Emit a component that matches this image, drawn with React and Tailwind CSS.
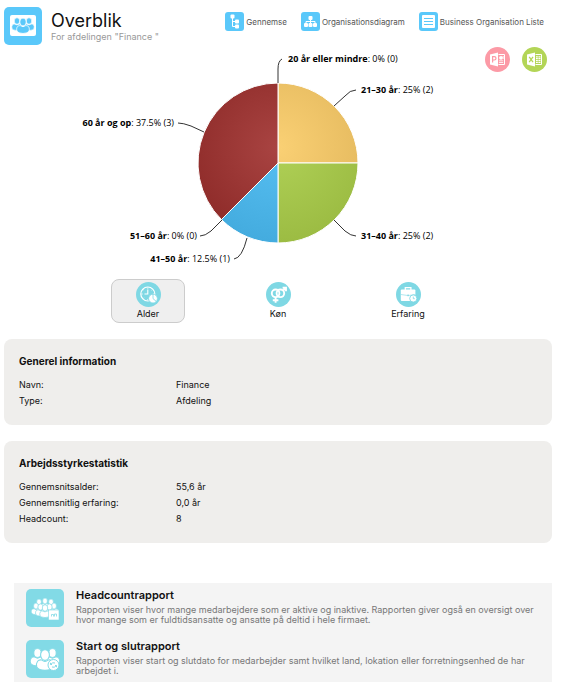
import React, { useState } from "react";
import clsx from "clsx";

// ─── data ────────────────────────────────────────────────────────────────────
const SLICES = [
  { id: "age-21", from: 0, to: 90, light: "#fad074", dark: "#e2b75c" },
  { id: "age-31", from: 90, to: 180, light: "#b0d157", dark: "#9aba41" },
  { id: "age-41", from: 180, to: 225, light: "#57bff2", dark: "#42aadd" },
  { id: "age-60", from: 225, to: 360, light: "#a94442", dark: "#8c2927" },
];

const SLICE_LABELS = [
  { name: "20 år eller mindre", value: "0% (0)", x: 218, y: 17, anchor: "start", line: "M208 38V24Q208 16 212 14" },
  { name: "21–30 år", value: "25% (2)", x: 291, y: 48, anchor: "start", line: "M264 61L275 51Q280 45 286 45" },
  { name: "31–40 år", value: "25% (2)", x: 291, y: 194, anchor: "start", line: "M264 175L275 186Q281 191 286 191" },
  { name: "41–50 år", value: "12.5% (1)", x: 160, y: 217, anchor: "end", line: "M177 193Q172 213 164 214" },
  { name: "51–60 år", value: "0% (0)", x: 127, y: 194, anchor: "end", line: "M152 175L141 186Q135 191 130 191" },
  { name: "60 år og op", value: "37.5% (3)", x: 104, y: 81, anchor: "end", line: "M134 87L121 81Q113 78 108 78" },
];

const GENERAL = [
  { label: "Navn:", value: "Finance" },
  { label: "Type:", value: "Afdeling" },
];

const WORKFORCE = [
  { label: "Gennemsnitsalder:", value: "55,6 år" },
  { label: "Gennemsnitlig erfaring:", value: "0,0 år" },
  { label: "Headcount:", value: "8" },
];

// ─── icons ───────────────────────────────────────────────────────────────────
function Person({ x, y, s = 1, stroke }) {
  return (
    <g transform={`translate(${x} ${y}) scale(${s})`} stroke={stroke} strokeWidth="1">
      <path d="M-7.5 11C-8.5 6-6 4-3 4.5Q0 7 3 4.5C6 4 8.5 6 7.5 11Q6 14 0 14T-7.5 11Z" />
      <ellipse cx="0" cy="0" rx="4" ry="4.8" />
    </g>
  );
}

function DepartmentIcon() {
  return (
    <svg viewBox="0 0 38 38" className="size-[38px] shrink-0" aria-hidden="true">
      <rect width="38" height="38" rx="5" fill="#5ac8fa" />
      <rect x="6" y="8" width="26" height="21" rx="2" fill="#fff" />
      <g fill="#5ac8fa">
        <Person x={13} y={14} s={0.68} stroke="#fff" />
        <Person x={25} y={14} s={0.68} stroke="#fff" />
        <Person x={19} y={15} s={0.82} stroke="#fff" />
      </g>
    </svg>
  );
}

function BrowseIcon() {
  return (
    <svg viewBox="0 0 19 19" className="size-[19px] shrink-0" aria-hidden="true">
      <rect width="19" height="19" rx="3" fill="#5ac8fa" />
      <path d="M7.5 5V14.5H11M7.5 9.5H11" fill="none" stroke="#fff" />
      <g fill="#fff">
        <rect x="5.5" y="2.5" width="4" height="4" rx="1" />
        <rect x="10" y="7.5" width="4" height="4" rx="1" />
        <rect x="10" y="12.5" width="4" height="4" rx="1" />
      </g>
    </svg>
  );
}

function DiagramIcon() {
  return (
    <svg viewBox="0 0 19 19" className="size-[19px] shrink-0" aria-hidden="true">
      <rect width="19" height="19" rx="3" fill="#5ac8fa" />
      <path d="M9.5 7V12M5 12V9.5H14V12" fill="none" stroke="#fff" />
      <g fill="#fff">
        <rect x="7.5" y="4" width="4" height="4" rx="1" />
        <rect x="3" y="11" width="4" height="4" rx="1" />
        <rect x="7.5" y="11" width="4" height="4" rx="1" />
        <rect x="12" y="11" width="4" height="4" rx="1" />
      </g>
    </svg>
  );
}

function ListIcon() {
  return (
    <svg viewBox="0 0 19 19" className="size-[19px] shrink-0" aria-hidden="true">
      <rect width="19" height="19" rx="3" fill="#5ac8fa" />
      <rect x="3" y="3" width="13" height="13" rx="1" fill="#fff" />
      <path d="M5 6.5H14M5 9.5H14M5 12.5H14" stroke="#5ac8fa" strokeWidth="1" />
    </svg>
  );
}

function PowerpointIcon() {
  return (
    <svg viewBox="0 0 25 25" className="size-[25px]" aria-hidden="true">
      <circle cx="12.5" cy="12.5" r="12.5" fill="#fc9aa6" />
      <path d="M5 7.5L13 5.5V19.5L5 17.5Z" fill="#fff" />
      <path d="M7.6 15.5V9.6H9.3Q11 9.6 11 11.3T9.3 13H7.6" fill="none" stroke="#fc9aa6" strokeWidth="1.2" />
      <path d="M13.5 7.5H19.5V17.5H13.5" fill="none" stroke="#fff" />
      <circle cx="16" cy="10.8" r="1.9" fill="#fff" />
      <path d="M14 13.8H18.2M14 15.5H18.2M18.2 9V12" stroke="#fff" strokeWidth=".8" />
    </svg>
  );
}

function ExcelIcon() {
  return (
    <svg viewBox="0 0 25 25" className="size-[25px]" aria-hidden="true">
      <circle cx="12.5" cy="12.5" r="12.5" fill="#b3d557" />
      <path d="M5 7.5L13 5.5V19.5L5 17.5Z" fill="#fff" />
      <path d="M7.2 9.8L11 15.2M11 9.8L7.2 15.2" stroke="#b3d557" strokeWidth="1.3" />
      <path d="M13.5 7.5H19.5V17.5H13.5" fill="none" stroke="#fff" />
      <path d="M14 9.8H18.5M14 11.7H18.5M14 13.6H18.5M14 15.5H18.5" stroke="#fff" strokeWidth="1.2" />
      <path d="M16.2 8.5V16.5" stroke="#b3d557" strokeWidth=".6" />
    </svg>
  );
}

function AgeIcon() {
  return (
    <svg viewBox="0 0 25 25" className="size-[25px]" aria-hidden="true">
      <circle cx="12.5" cy="12.5" r="12.5" fill="#7fd8e4" />
      <g fill="none" stroke="#fff">
        <circle cx="11.8" cy="12" r="7" strokeWidth="1.2" />
        <path d="M11.8 7.5V12H8.5" strokeWidth="1.1" />
        <path d="M11.8 5.5V6.8M5.5 12H6.8M16.8 12H18M11.8 17V18.5M7.3 7.5L8 8.2M16.3 7.5L15.6 8.2M7.3 16.5L8 15.8" strokeWidth=".8" />
      </g>
      <circle cx="17" cy="16.6" r="4.4" fill="#fff" stroke="#7fd8e4" strokeWidth=".8" />
      <path d="M17 16.6V12.2M17 16.6L20.5 19.6" stroke="#7fd8e4" strokeWidth=".8" />
    </svg>
  );
}

function GenderIcon() {
  return (
    <svg viewBox="0 0 25 25" className="size-[25px]" aria-hidden="true">
      <circle cx="12.5" cy="12.5" r="12.5" fill="#7fd8e4" />
      <g fill="none" stroke="#fff" strokeWidth="1.9">
        <circle cx="9.6" cy="11.3" r="3.8" />
        <circle cx="14.4" cy="11.3" r="3.8" />
        <path d="M9.6 15V20.8M6.8 18.2H12.4M17 8.6L20 5.8M16.6 5.8H20V9.2" />
      </g>
    </svg>
  );
}

function ExperienceIcon() {
  return (
    <svg viewBox="0 0 25 25" className="size-[25px]" aria-hidden="true">
      <circle cx="12.5" cy="12.5" r="12.5" fill="#7fd8e4" />
      <path d="M9.3 8V5.7H14.9V8" fill="none" stroke="#fff" strokeWidth="1.3" />
      <rect x="4.8" y="7.5" width="14.6" height="11.5" rx="1" fill="#fff" />
      <path d="M4.8 12.5L11 13.4H13.2L19.4 12.5" fill="none" stroke="#7fd8e4" strokeWidth=".6" />
      <rect x="11.4" y="12.6" width="1.4" height="1.6" fill="#7fd8e4" />
      <circle cx="17.3" cy="16.5" r="3.6" fill="#fff" stroke="#7fd8e4" strokeWidth=".9" />
      <path d="M17.3 14.6V16.7H18.8" fill="none" stroke="#7fd8e4" strokeWidth=".8" />
    </svg>
  );
}

function HeadcountIcon() {
  return (
    <svg viewBox="0 0 38 38" className="size-[38px] shrink-0" aria-hidden="true">
      <rect width="38" height="38" rx="5" fill="#82dae6" />
      <g fill="#fff">
        <Person x={13} y={13} s={0.6} stroke="#82dae6" />
        <Person x={25} y={13} s={0.6} stroke="#82dae6" />
        <Person x={19} y={12} s={0.6} stroke="#82dae6" />
        <Person x={10} y={17} s={0.62} stroke="#82dae6" />
        <Person x={28} y={17} s={0.62} stroke="#82dae6" />
        <Person x={14.5} y={18} s={0.65} stroke="#82dae6" />
        <Person x={23.5} y={18} s={0.65} stroke="#82dae6" />
        <Person x={19} y={19} s={0.68} stroke="#82dae6" />
      </g>
      <rect x="22.5" y="21" width="10.5" height="10" fill="#fff" stroke="#82dae6" strokeWidth=".6" />
      <path d="M25.5 27.5V25.5H27.5V27.5M28.5 27.5V25H30.5V27.5" fill="none" stroke="#82dae6" strokeWidth=".8" />
    </svg>
  );
}

function StartEndIcon() {
  return (
    <svg viewBox="0 0 38 38" className="size-[38px] shrink-0" aria-hidden="true">
      <rect width="38" height="38" rx="5" fill="#82dae6" />
      <g fill="#fff">
        <Person x={11.5} y={13} s={0.92} stroke="#82dae6" />
        <Person x={26.5} y={13} s={0.92} stroke="#82dae6" />
        <Person x={19} y={15} s={1.1} stroke="#82dae6" />
      </g>
      <circle cx="27.5" cy="25" r="5.5" fill="#fff" stroke="#82dae6" />
      <path d="M24.8 24.5Q26 21.8 29 23M30.2 25.5Q29 28.2 26 27M26 24.5H24.5V22.8M29 25.5H30.5V27.2" fill="none" stroke="#82dae6" />
    </svg>
  );
}

const NAV_LINKS = [
  { label: "Gennemse", Icon: BrowseIcon },
  { label: "Organisationsdiagram", Icon: DiagramIcon },
  { label: "Business Organisation Liste", Icon: ListIcon },
];

const TABS = [
  { id: "age", label: "Alder", Icon: AgeIcon },
  { id: "gender", label: "Køn", Icon: GenderIcon },
  { id: "experience", label: "Erfaring", Icon: ExperienceIcon },
];

const REPORTS = [
  {
    title: "Headcountrapport",
    text: "Rapporten viser hvor mange medarbejdere som er aktive og inaktive. Rapporten giver også en oversigt over hvor mange som er fuldtidsansatte og ansatte på deltid i hele firmaet.",
    Icon: HeadcountIcon,
  },
  {
    title: "Start og slutrapport",
    text: "Rapporten viser start og slutdato for medarbejder samt hvilket land, lokation eller forretningsenhed de har arbejdet i.",
    Icon: StartEndIcon,
  },
];

// ─── pie chart ───────────────────────────────────────────────────────────────
const CX = 208;
const CY = 118;
const R = 80;

function slicePath(from, to) {
  const point = (deg) => {
    const a = ((deg - 90) * Math.PI) / 180;
    return `${CX + R * Math.cos(a)} ${CY + R * Math.sin(a)}`;
  };
  return `M${CX} ${CY}L${point(from)}A${R} ${R} 0 0 1 ${point(to)}Z`;
}

function AgeChart() {
  return (
    <svg viewBox="0 0 416 230" className="h-[230px] w-[416px]" role="img" aria-label="Alder">
      <defs>
        {SLICES.map((s) => (
          <radialGradient key={s.id} id={s.id} gradientUnits="userSpaceOnUse" cx={CX} cy={CY - 16} r="104">
            <stop offset="0" stopColor={s.light} />
            <stop offset="1" stopColor={s.dark} />
          </radialGradient>
        ))}
      </defs>
      {SLICES.map((s) => (
        <path key={s.id} d={slicePath(s.from, s.to)} fill={`url(#${s.id})`} stroke="#fff" strokeLinejoin="round" />
      ))}
      {SLICE_LABELS.map((l) => (
        <g key={l.name}>
          <path d={l.line} fill="none" stroke="#333" />
          <text x={l.x} y={l.y} textAnchor={l.anchor} className="font-['Open_Sans',sans-serif] text-[9px]">
            <tspan className="font-bold">{l.name}</tspan>: {l.value}
          </text>
        </g>
      ))}
    </svg>
  );
}

// ─── info card ───────────────────────────────────────────────────────────────
function InfoCard({ title, rows }) {
  return (
    <section className="rounded-lg bg-[#efeeec] px-[15px] pt-[14px] pb-4">
      <h2 className="text-[10px] leading-4 font-bold">{title}</h2>
      <dl className="mt-2 text-[9px] leading-4">
        {rows.map((row) => (
          <div key={row.label} className="flex">
            <dt className="w-[157px]">{row.label}</dt>
            <dd>{row.value}</dd>
          </div>
        ))}
      </dl>
    </section>
  );
}

// ─── page ────────────────────────────────────────────────────────────────────
function App() {
  const [tab, setTab] = useState("age");

  return (
    <main className="bg-white pt-[7px] pr-[9px] pb-[7px] pl-1 font-['Inter',sans-serif] text-[#111]">
      {/* ── HEADER ─────────────────────────────────────────────────────── */}
      <header className="flex items-start justify-between">
        <div className="flex gap-[9px]">
          <DepartmentIcon />
          <div className="pt-1">
            <h1 className="text-[18px] leading-5">Overblik</h1>
            <p className="text-[9px] leading-3 text-[#999]">For afdelingen "Finance "</p>
          </div>
        </div>
        <nav className="flex gap-[14px] pt-[5px] pr-2">
          {NAV_LINKS.map(({ label, Icon }) => (
            <a key={label} href="#" className="flex items-center gap-[2px] text-[8px] leading-4 whitespace-nowrap text-[#555]">
              <Icon />
              {label}
            </a>
          ))}
        </nav>
      </header>

      {/* ── CHART ──────────────────────────────────────────────────────── */}
      <div className="relative flex justify-center">
        <AgeChart />
        <div className="absolute top-[2px] right-[5px] flex gap-3">
          <button type="button" aria-label="PowerPoint">
            <PowerpointIcon />
          </button>
          <button type="button" aria-label="Excel">
            <ExcelIcon />
          </button>
        </div>
      </div>

      {/* ── CHART TABS ─────────────────────────────────────────────────── */}
      <div role="tablist" className="mt-1 flex justify-center gap-14">
        {TABS.map(({ id, label, Icon }) => (
          <button
            key={id}
            type="button"
            role="tab"
            aria-selected={tab === id}
            onClick={() => setTab(id)}
            className={clsx(
              "flex h-11 w-[74px] flex-col items-center rounded-lg border pt-[2px] text-[9px] leading-[14px]",
              tab === id ? "border-[#ccc] bg-[#efefef]" : "border-transparent",
            )}
          >
            <Icon />
            {label}
          </button>
        ))}
      </div>

      {/* ── INFO ───────────────────────────────────────────────────────── */}
      <div className="mt-4 flex flex-col gap-4">
        <InfoCard title="Generel information" rows={GENERAL} />
        <InfoCard title="Arbejdsstyrkestatistik" rows={WORKFORCE} />
      </div>

      {/* ── REPORTS ────────────────────────────────────────────────────── */}
      <section className="mt-10 ml-[10px] flex flex-col gap-[13px] bg-[#f4f4f4] pt-[6px] pr-4 pb-1 pl-3">
        {REPORTS.map(({ title, text, Icon }) => (
          <a key={title} href="#" className="flex gap-3">
            <Icon />
            <div>
              <h3 className="text-[11px] leading-3 font-semibold">{title}</h3>
              <p className="mt-1 text-[9px] leading-[10px] text-[#777]">{text}</p>
            </div>
          </a>
        ))}
      </section>
    </main>
  );
}

export default App;
